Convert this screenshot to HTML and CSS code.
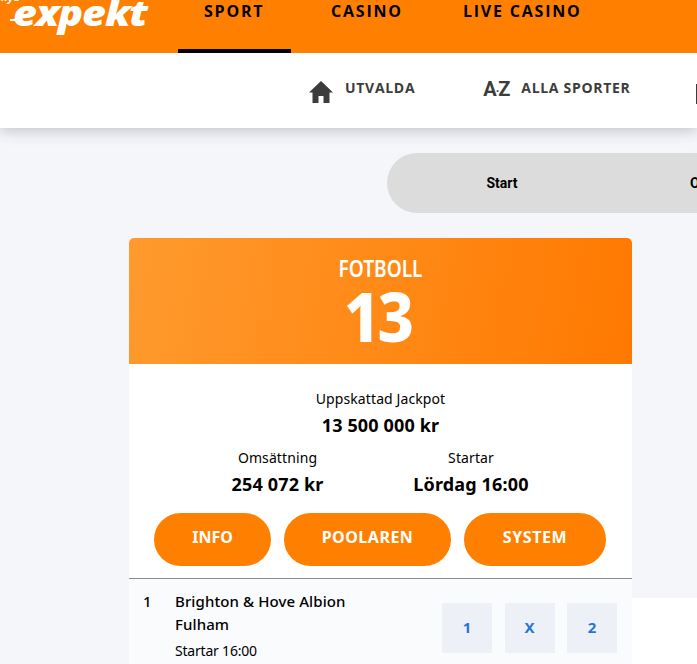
FILE: index.html
```html
<!DOCTYPE html>
<html lang="en">
<head>
    <meta charset="UTF-8">
    <title>Expekt || Fotboll 13</title>
    <link rel="stylesheet" href="styles.css">
</head>
<body>
<div class="topbar">
    <div class="logo"><span class="logo-small">nya</span><span class="logo-dash"></span><span class="logo-text">expekt</span></div>
    <a class="topnav active">SPORT</a>
    <a class="topnav">CASINO</a>
    <a class="topnav">LIVE CASINO</a>
</div>

<div class="subnav">
    <a class="subitem home">
        <svg class="home-icon" viewBox="0 0 24 22"><path d="M12 0 0 11.500h3.500V22h6v-7h5v7h6V11.500H24z"/></svg>
        UTVALDA
    </a>
    <a class="subitem az">
        <span class="az-icon">A<i>·</i>Z</span>
        ALLA SPORTER
    </a>
    <span class="next-icon"></span>
</div>

<div class="content">
    <div class="tabs">
        <span class="tab">Start</span>
        <span class="tab">Om</span>
    </div>

    <div class="card">
        <div class="card-head">
            <div class="game-name">FOTBOLL</div>
            <div class="game-number">13</div>
        </div>
        <div class="card-info">
            <div class="info-label">Uppskattad Jackpot</div>
            <div class="info-value">13 500 000 kr</div>
            <div class="info-cols">
                <div class="info-col">
                    <div class="info-label">Omsättning</div>
                    <div class="info-value">254 072 kr</div>
                </div>
                <div class="info-col">
                    <div class="info-label">Startar</div>
                    <div class="info-value">Lördag 16:00</div>
                </div>
            </div>
            <div class="buttons">
                <a class="btn btn-info">INFO</a>
                <a class="btn btn-pool">POOLAREN</a>
                <a class="btn btn-system">SYSTEM</a>
            </div>
        </div>
        <div class="match">
            <div class="match-no">1</div>
            <div class="match-teams">
                <div>Brighton &amp; Hove Albion</div>
                <div>Fulham</div>
                <div class="match-time">Startar 16:00</div>
            </div>
            <div class="odds">
                <a class="odd">1</a>
                <a class="odd">X</a>
                <a class="odd">2</a>
            </div>
        </div>
    </div>
</div>
</body>
</html>
```

FILE: styles.css
```css
* {
    margin: 0;
    padding: 0;
    box-sizing: border-box;
}

html, body {
    height: 664px;
    overflow: hidden;
    background-color: #fff;
}

body {
    font-family: "Noto Sans", "Open Sans", sans-serif;
    color: #000;
}

.topbar {
    height: 53px;
    background-color: #ff8000;
    display: flex;
    align-items: flex-start;
    position: relative;
    z-index: 2;
    overflow: hidden;
}

.logo {
    width: 178px;
    height: 53px;
    position: relative;
    color: #fff;
}

.logo-small {
    position: absolute;
    left: 1px;
    top: -11px;
    font-size: 11px;
    font-weight: 700;
    font-style: italic;
}

.logo-dash {
    position: absolute;
    left: 10px;
    top: 19px;
    width: 12px;
    height: 2px;
    background-color: #fff;
}

.logo-text {
    position: absolute;
    left: 13px;
    top: -12px;
    font-family: "Open Sans", sans-serif;
    font-size: 36px;
    font-weight: 800;
    font-style: italic;
    letter-spacing: -1px;
    transform: scaleX(1.15);
    transform-origin: left top;
}

.topnav {
    height: 53px;
    padding: 0 26px;
    font-family: "Open Sans", sans-serif;
    font-size: 16px;
    font-weight: 700;
    letter-spacing: 1.8px;
    line-height: 22px;
    color: #000;
    white-space: nowrap;
}

.topnav.active {
    width: 113px;
    border-bottom: 4px solid #000;
}

.topnav:nth-child(3) {
    margin-left: 14px;
}

.topnav:nth-child(4) {
    margin-left: 8px;
}

.subnav {
    height: 75px;
    background-color: #fff;
    box-shadow: 0 2px 14px rgba(40, 45, 70, .28);
    display: flex;
    align-items: center;
    position: relative;
    z-index: 1;
    overflow: hidden;
}

.subitem {
    display: flex;
    align-items: center;
    font-family: "Open Sans", sans-serif;
    font-size: 14px;
    font-weight: 700;
    letter-spacing: .7px;
    line-height: 20px;
    color: #3c3c3c;
    white-space: nowrap;
    margin-top: -5px;
}

.home {
    margin-left: 309px;
}

.home-icon {
    width: 24px;
    height: 22px;
    fill: #3c3c3c;
    margin-right: 12px;
    margin-top: 7px;
}

.az {
    margin-left: 68px;
}

.az-icon {
    width: 26px;
    margin-right: 12px;
    margin-top: 5px;
    font-family: Roboto, sans-serif;
    font-size: 20px;
    font-weight: 700;
    letter-spacing: -1px;
}

.az-icon i {
    font-style: normal;
    font-size: 12px;
}

.next-icon {
    width: 3px;
    height: 20px;
    margin-left: 65px;
    margin-top: 6px;
    background-color: #3c3c3c;
}

.content {
    height: 470px;
    background-color: #f5f6fa;
    position: relative;
}

/* the grey page colour goes on down the left of the card */
.content::after {
    content: "";
    position: absolute;
    left: 0;
    top: 470px;
    width: 129px;
    height: 66px;
    background-color: #f5f6fa;
}

.tabs {
    position: absolute;
    left: 387px;
    top: 25px;
    width: 500px;
    height: 60px;
    border-radius: 30px;
    background-color: #dcdcdc;
    display: flex;
    align-items: center;
}

.tab {
    font-family: Roboto, sans-serif;
    font-size: 14px;
    font-weight: 700;
    text-align: center;
    width: 230px;
    white-space: nowrap;
}

.tab + .tab {
    margin-left: -40px;
    text-align: left;
    padding-left: 113px;
    width: 300px;
}

.card {
    position: absolute;
    left: 129px;
    top: 110px;
    width: 503px;
    height: 426px;
    background-color: #fff;
    border-radius: 5px 5px 0 0;
    overflow: hidden;
}

.card-head {
    height: 126px;
    background: linear-gradient(100deg, #ff9a2e 0%, #ff7900 100%);
    color: #fff;
    text-align: center;
}

.game-name {
    font-size: 23px;
    font-weight: 600;
    line-height: 30px;
    padding-top: 15px;
    height: 45px;
    transform: scaleX(.83);
}

.game-number {
    font-size: 68px;
    font-weight: 800;
    line-height: 66px;
    letter-spacing: -3px;
    transform: scaleX(.93);
    margin-left: -6px;
}

.card-info {
    height: 215px;
    padding-top: 24px;
    text-align: center;
    border-bottom: 1px solid #8a8a8a;
}

.info-label {
    font-size: 14px;
    line-height: 22px;
    letter-spacing: .1px;
}

.info-value {
    font-size: 18px;
    font-weight: 700;
    line-height: 30px;
    letter-spacing: .15px;
    white-space: nowrap;
}

.info-cols {
    display: flex;
    margin-top: 7px;
}

.info-col {
    text-align: center;
}

.info-col:first-child {
    width: 297px;
}

.info-col:last-child {
    width: 190px;
    margin-left: -50px;
}

.buttons {
    display: flex;
    gap: 13px;
    margin-top: 14px;
    padding-left: 25px;
}

.btn {
    height: 53px;
    border-radius: 27px;
    background-color: #ff8000;
    color: #fff;
    font-size: 16px;
    font-weight: 700;
    line-height: 48px;
    text-align: center;
}

.btn-info {
    width: 117px;
}

.btn-pool {
    width: 167px;
    letter-spacing: .5px;
}

.btn-system {
    width: 142px;
    letter-spacing: .6px;
}

.match {
    height: 85px;
    background-color: #fafbfd;
    display: flex;
    font-size: 15px;
    font-weight: 500;
    padding-top: 11px;
}

.match-no {
    width: 46px;
    padding-left: 14px;
    line-height: 22px;
}

.match-teams {
    width: 267px;
    line-height: 23px;
    letter-spacing: .1px;
}

.match-time {
    font-size: 14px;
    font-weight: 400;
    line-height: 24px;
    margin-top: 3px;
    letter-spacing: -.2px;
}

.odds {
    display: flex;
    gap: 12.500px;
    margin-top: 13px;
}

.odd {
    width: 50px;
    height: 50px;
    background-color: #edf0f7;
    color: #2a74d4;
    font-size: 15px;
    font-weight: 700;
    line-height: 48px;
    text-align: center;
}
```
